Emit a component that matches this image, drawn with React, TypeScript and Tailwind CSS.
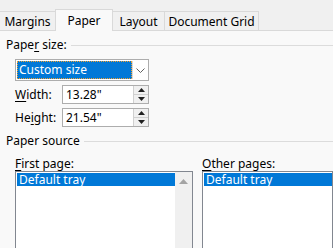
const Tab = ({ label, active, w }: { label: string; active?: boolean; w: string }) => (
    <div
        className={
            active
                ? `${w} h-[22px] -mb-px bg-[#f9f9f9] border border-b-0 border-[#d9d9d9] flex items-start justify-center pt-[2px] z-10`
                : `${w} h-[19px] bg-[#f0f0f0] border border-b-0 border-[#d9d9d9] -ml-px flex items-start justify-center pt-[1px]`
        }
    >
        {label}
    </div>
);

const Spinner = () => (
    <div className="w-[15px] h-full border-l border-[#d0d0d0] flex flex-col bg-[#f0f0f0]">
        <div className="flex-1 flex items-center justify-center border-b border-[#d0d0d0]">
            <svg width="7" height="4" viewBox="0 0 7 4">
                <path d="M3.5 0 L7 4 L0 4 Z" fill="#202020" />
            </svg>
        </div>
        <div className="flex-1 flex items-center justify-center">
            <svg width="7" height="4" viewBox="0 0 7 4">
                <path d="M0 0 L7 0 L3.5 4 Z" fill="#202020" />
            </svg>
        </div>
    </div>
);

const NumberField = ({ label, accel, rest, value }: { label?: string; accel: string; rest: string; value: string }) => (
    <div className="flex items-center mt-[4px] ml-[15px]">
        <div className="w-[47px]">
            {label}
            <span className="underline underline-offset-2">{accel}</span>
            {rest}
        </div>
        <div className="w-[87px] h-[19px] border border-[#adadad] bg-white flex">
            <div className="flex-1 pl-[3px] leading-[17px]">{value}</div>
            <Spinner />
        </div>
    </div>
);

const ListBox = ({ scroll }: { scroll?: boolean }) => (
    <div className="h-[80px] border border-[#828790] bg-white flex">
        <div className="flex-1 pt-[1px] pl-px">
            <div className="h-[13px] bg-[#0078d7] text-white leading-[13px] pl-[2px]">Default tray</div>
        </div>
        {scroll && (
            <div className="w-[17px] bg-[#f0f0f0] flex justify-center pt-[7px]">
                <svg width="9" height="5" viewBox="0 0 9 5">
                    <path d="M4.5 0 L9 5 L0 5 Z" fill="#a3a3a3" />
                </svg>
            </div>
        )}
    </div>
);

const App = () => (
    <div
        className="w-[333px] h-[248px] overflow-hidden bg-[#f0f0f0] text-[12px] text-black"
        style={{ fontFamily: '"Noto Sans", sans-serif' }}
    >
        <div className="flex items-end pt-[9px] h-[31px] border-b border-[#d9d9d9]">
            <Tab label="Margins" w="w-[57px] -ml-[2px]" />
            <Tab label="Paper" active w="w-[58px] -ml-px" />
            <Tab label="Layout" w="w-[53px]" />
            <Tab label="Document Grid" w="w-[95px]" />
        </div>

        <div className="bg-[#f9f9f9] h-full">
            <div className="flex items-center h-[16px] pt-[6px] box-content pl-[6px]">
                <span>
                    Pape<span className="underline underline-offset-2">r</span> size:
                </span>
                <div className="flex-1 h-px bg-[#dcdcdc] ml-[4px]" />
            </div>

            <div className="mt-[6px] ml-[15px] w-[134px] h-[22px] border border-[#adadad] bg-white flex p-px">
                <div className="w-[115px] bg-[#0078d7] text-white leading-[18px] pl-[2px] outline-1 outline-dotted outline-[#f0a030] -outline-offset-1">
                    Custom size
                </div>
                <div className="flex-1 border-l border-[#d9d9d9] flex items-center justify-center">
                    <svg width="9" height="5" viewBox="0 0 9 5">
                        <path d="M0.5 0.5 L4.5 4.5 L8.5 0.5" fill="none" stroke="#606060" strokeWidth="1" />
                    </svg>
                </div>
            </div>

            <NumberField accel="W" rest="idth:" value={'13.28"'} />
            <NumberField label="He" accel="i" rest="ght:" value={'21.54"'} />

            <div className="flex items-center h-[16px] mt-[6px] pl-[6px]">
                <span>Paper source</span>
                <div className="flex-1 h-px bg-[#dcdcdc] ml-[4px]" />
            </div>

            <div className="flex ml-[15px] mt-[6px] gap-[9px]">
                <div className="w-[178px]">
                    <div className="h-[16px]">
                        <span className="underline underline-offset-2">F</span>irst page:
                    </div>
                    <ListBox scroll />
                </div>
                <div className="flex-1">
                    <div className="h-[16px]">
                        <span className="underline underline-offset-2">O</span>ther pages:
                    </div>
                    <ListBox />
                </div>
            </div>
        </div>
    </div>
);

export default App;
